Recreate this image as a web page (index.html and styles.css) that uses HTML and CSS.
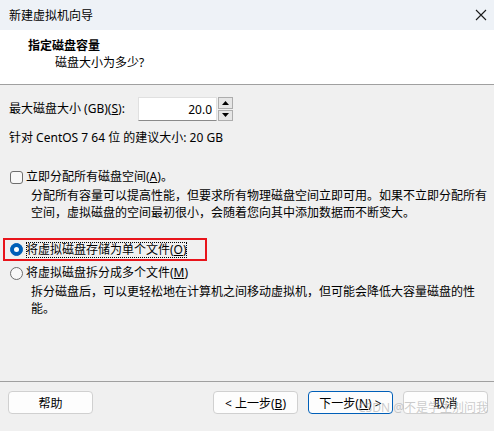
FILE: index.html
```html
<!DOCTYPE html>
<html>

<head>
    <title>新建虚拟机向导</title>
    <link rel="stylesheet" href="styles.css">
</head>

<body>
    <div class="window">
        <div class="titlebar">
            <span class="title">新建虚拟机向导</span>
            <svg class="close" width="12" height="12" viewBox="0 0 12 12">
                <path d="M1 1 L11 11 M11 1 L1 11" stroke="#1a1a1a" stroke-width="1.1" fill="none"/>
            </svg>
        </div>

        <div class="header">
            <div class="header-title">指定磁盘容量</div>
            <div class="header-sub">磁盘大小为多少?</div>
        </div>

        <div class="content">
            <div class="size-row">
                <label>最大磁盘大小 (GB)(<u>S</u>):</label>
                <div class="spin">
                    <input class="spin-input" type="text" value="20.0">
                    <div class="spin-buttons">
                        <span class="spin-btn"><svg width="7" height="4" viewBox="0 0 7 4"><path d="M0 4 L3.5 0 L7 4 Z" fill="#000"/></svg></span>
                        <span class="spin-btn"><svg width="7" height="4" viewBox="0 0 7 4"><path d="M0 0 L3.5 4 L7 0 Z" fill="#000"/></svg></span>
                    </div>
                </div>
            </div>
            <div class="hint">针对 CentOS 7 64 位 的建议大小: 20 GB</div>

            <div class="option check-option">
                <span class="checkbox"></span>
                <span>立即分配所有磁盘空间(<u>A</u>)。</span>
            </div>
            <div class="desc">分配所有容量可以提高性能，但要求所有物理磁盘空间立即可用。如果不立即分配所有空间，虚拟磁盘的空间最初很小，会随着您向其中添加数据而不断变大。</div>

            <div class="highlight">
                <div class="option">
                    <span class="radio checked"></span>
                    <span class="focus">将虚拟磁盘存储为单个文件(<u>O</u>)</span>
                </div>
            </div>
            <div class="option second">
                <span class="radio"></span>
                <span>将虚拟磁盘拆分成多个文件(<u>M</u>)</span>
            </div>
            <div class="desc">拆分磁盘后，可以更轻松地在计算机之间移动虚拟机，但可能会降低大容量磁盘的性能。</div>
        </div>

        <div class="footer">
            <button class="btn">帮助</button>
            <div class="nav">
                <button class="btn">&lt; 上一步(<u>B</u>)</button>
                <button class="btn primary">下一步(<u>N</u>) &gt;</button>
                <button class="btn">取消</button>
            </div>
            <span class="watermark">CSDN @不是学生别问我</span>
        </div>
    </div>
</body>

</html>
```

FILE: styles.css
```css
body {
    margin: 0;
    font-family: "Noto Sans", "Noto Sans CJK SC", sans-serif;
    font-size: 12px;
    color: #000;
    background-color: #f0f0f0;
}

.window {
    width: 494px;
    height: 431px;
    display: flex;
    flex-direction: column;
    background-color: #f0f0f0;
    position: relative;
}

.titlebar {
    height: 30px;
    display: flex;
    align-items: center;
    justify-content: space-between;
    padding: 0 7px 0 9px;
    background-color: #eef2f7;
}

.title {
    font-size: 12px;
}

.header {
    height: 55px;
    background-color: #fff;
    border-bottom: 1px solid #a0a0a0;
    padding-top: 8px;
    box-sizing: border-box;
    line-height: 16px;
}

.header-title {
    font-weight: bold;
    padding-left: 28px;
}

.header-sub {
    padding-left: 55px;
    margin-top: 1px;
}

.content {
    flex: 1;
    padding: 12px 0 0 0;
    line-height: 16px;
}

.size-row {
    display: flex;
    align-items: center;
    padding-left: 9px;
    height: 24px;
}

.size-row label {
    width: 129px;
}

.spin {
    display: flex;
    height: 24px;
}

.spin-input {
    width: 79px;
    height: 24px;
    box-sizing: border-box;
    border: 1px solid #e0e0e0;
    border-bottom: 1px solid #8a8a8a;
    background-color: #fff;
    text-align: right;
    font-family: inherit;
    font-size: 12px;
    padding: 0 4px;
}

.spin-buttons {
    display: flex;
    flex-direction: column;
    width: 15px;
    margin-left: 1px;
    gap: 1px;
}

.spin-btn {
    flex: 1;
    display: flex;
    align-items: center;
    justify-content: center;
    background-color: #e6e6e6;
    border: 1px solid #adadad;
}

.hint {
    padding-left: 9px;
    margin-top: 9px;
}

.option {
    display: flex;
    align-items: center;
    padding-left: 10px;
    height: 18px;
    gap: 3px;
}

.check-option {
    margin-top: 22px;
}

.checkbox {
    width: 11px;
    height: 11px;
    border: 1px solid #6e6e6e;
    border-radius: 3px;
    background-color: #f8f8f8;
}

.radio {
    width: 11px;
    height: 11px;
    border: 1px solid #6e6e6e;
    border-radius: 50%;
    background-color: #f8f8f8;
    position: relative;
}

.radio.checked {
    border-color: #005fb8;
    background-color: #005fb8;
}

.radio.checked::after {
    content: "";
    position: absolute;
    left: 3px;
    top: 3px;
    width: 5px;
    height: 5px;
    border-radius: 50%;
    background-color: #fff;
}

.desc {
    padding: 1px 2px 0 31px;
    line-height: 17px;
}

.highlight {
    margin: 17px 0 0 3px;
    width: 200px;
    height: 19px;
    border: 2px solid #e8141b;
    display: flex;
    align-items: center;
}

.highlight .option {
    padding-left: 5px;
}

.focus {
    outline: 1px dotted #000;
    outline-offset: -1px;
}

.second {
    margin-top: 3px;
}

.footer {
    height: 40px;
    border-top: 1px solid #a0a0a0;
    display: flex;
    align-items: flex-start;
    justify-content: space-between;
    padding: 9px 6px 0 8px;
    position: relative;
}

.nav {
    display: flex;
    gap: 10px;
}

.btn {
    width: 85px;
    height: 23px;
    box-sizing: border-box;
    border: 1px solid #d0d0d0;
    border-radius: 4px;
    background-color: #fdfdfd;
    font-family: inherit;
    font-size: 12px;
    color: #000;
    padding: 0;
}

.btn.primary {
    border: 1px solid #005fb8;
}

.watermark {
    position: absolute;
    right: 6px;
    top: 16px;
    font-size: 12px;
    color: rgba(170, 170, 170, 0.6);
}
```
